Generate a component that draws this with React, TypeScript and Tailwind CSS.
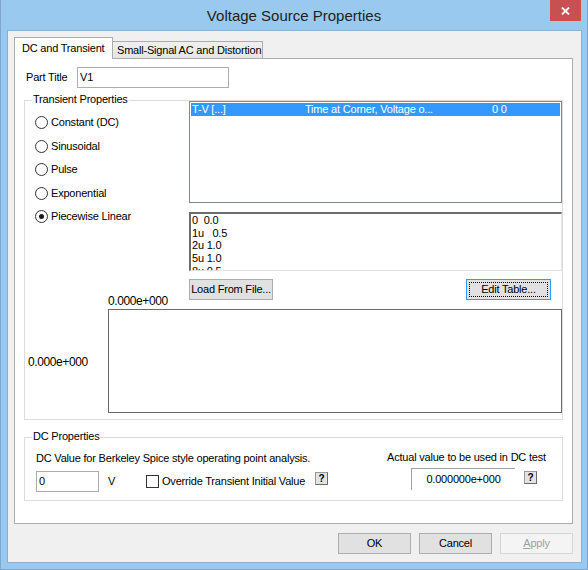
import type { ReactNode } from "react";

// small windows-style push button
const Btn = ({
    w,
    children,
    focus = false,
    disabled = false,
}: {
    w: string;
    children: ReactNode;
    focus?: boolean;
    disabled?: boolean;
}) => {
    return (
        <div
            className={`${w} h-[21px] border ${
                focus ? "border-[#3399ff] p-[2px]" : disabled ? "border-[#d5d5d5]" : "border-[#adadad]"
            } ${disabled ? "bg-[#f4f4f4] text-[#a0a0a0]" : "bg-[#e1e1e1]"} flex items-center justify-center`}
        >
            {focus ? (
                <div className="w-full h-full border border-dotted border-black flex items-center justify-center">
                    {children}
                </div>
            ) : (
                children
            )}
        </div>
    );
};

const Help = ({ className }: { className: string }) => (
    <div
        className={`${className} w-[13px] h-[13px] border border-t-[#9a9a9a] border-l-[#9a9a9a] border-r-[#6a6a6a] border-b-[#6a6a6a] bg-[#e3e3e3] flex items-center justify-center text-[10px] font-bold leading-none tracking-normal`}
    >
        ?
    </div>
);

const Radio = ({ label, checked = false }: { label: string; checked?: boolean }) => (
    <div className="h-[23.5px] flex items-center gap-[3px]">
        <span className="w-[13px] h-[13px] rounded-full border border-[#333333] bg-white flex items-center justify-center">
            {checked && <span className="w-[5px] h-[5px] rounded-full bg-[#1a1a1a]" />}
        </span>
        <span>{label}</span>
    </div>
);

export default function App() {
    const modes = ["Constant (DC)", "Sinusoidal", "Pulse", "Exponential", "Piecewise Linear"];
    const pwl = ["0  0.0", "1u   0.5", "2u 1.0", "5u 1.0", "8u 0.5"];

    return (
        <div className="w-[588px] h-[570px] bg-[#99c9ef] border-x border-b border-[#7ea6ce] font-['Liberation_Sans',Arial,sans-serif] text-[11px] leading-[13px] tracking-[-0.2px] text-black select-none">
            {/* title bar */}
            <div className="h-[30px] grid grid-cols-[1fr_auto_1fr]">
                <div />
                <div className="self-center pt-[2px] text-[15px] leading-[18px] tracking-normal text-[#222222]">
                    Voltage Source Properties
                </div>
                <div className="flex justify-end">
                    <div className="mr-[6px] w-[31px] h-[21px] bg-[#c75050] flex items-center justify-center">
                        <svg width="9" height="8" viewBox="0 0 9 8">
                            <path d="M1 0.5 L8 7.5 M8 0.5 L1 7.5" stroke="white" strokeWidth="1.8" />
                        </svg>
                    </div>
                </div>
            </div>

            {/* client area */}
            <div className="ml-[6px] mr-[5px] h-[533px] border border-[#8bb0d4] bg-[#f0f0f0] flex flex-col">
                <div className="ml-[6px] mt-[6px]">
                    {/* tabs */}
                    <div className="flex items-end h-[21px]">
                        <div className="relative z-10 -mb-px h-[22px] w-[99px] bg-white border border-b-0 border-[#acacac] pl-[7px] flex items-center">
                            DC and Transient
                        </div>
                        <div className="h-[17px] w-[150px] border-t border-r border-[#acacac] bg-linear-to-b from-[#f0f0f0] to-[#e5e5e5] pl-[4px] flex items-center">
                            Small-Signal AC and Distortion
                        </div>
                    </div>

                    {/* tab page */}
                    <div className="w-[559px] h-[466px] border border-[#acacac] bg-white">
                        <div className="flex items-center mt-[8px] ml-[11px]">
                            <span className="w-[51px]">Part Title</span>
                            <div className="w-[152px] h-[21px] border border-[#abadb3] pl-[2px] flex items-center">V1</div>
                        </div>

                        {/* Transient group */}
                        <div className="relative ml-[9px] mt-[12px] w-[539px] h-[320px] border border-[#dcdcdc]">
                            <span className="absolute left-[7px] -top-[8px] bg-white px-[1px]">Transient Properties</span>
                            <div className="flex">
                                <div className="w-[164px] pt-[10px] pl-[10px]">
                                    {modes.map((m) => (
                                        <Radio key={m} label={m} checked={m === "Piecewise Linear"} />
                                    ))}
                                </div>
                                <div className="w-[373px]">
                                    {/* list box */}
                                    <div className="h-[102px] border border-[#828790] bg-white p-[1px]">
                                        <div className="h-[13px] bg-[#3399ff] text-white flex items-center pl-[1px] whitespace-nowrap">
                                            <span className="w-[113px]">T-V [...]</span>
                                            <span className="w-[187px]">Time at Corner, Voltage o...</span>
                                            <span>0 0</span>
                                        </div>
                                    </div>
                                    {/* points */}
                                    <div className="mt-[9px] h-[59px] border-t-2 border-l-2 border-r border-b border-t-[#6d6d6d] border-l-[#6d6d6d] border-r-[#e3e3e3] border-b-[#e3e3e3] bg-white overflow-hidden pl-[1px] leading-[12.7px] whitespace-pre">
                                        {pwl.map((l) => (
                                            <div key={l}>{l}</div>
                                        ))}
                                    </div>
                                    <div className="mt-[8px] flex">
                                        <Btn w="w-[84px]">Load From File...</Btn>
                                        <div className="ml-auto mr-[11px]">
                                            <Btn w="w-[85px]" focus>
                                                Edit Table...
                                            </Btn>
                                        </div>
                                    </div>
                                </div>
                            </div>

                            {/* graph preview */}
                            <div className="flex -mt-[5px] text-[12px] tracking-[-0.4px]">
                                <div className="w-[83px] flex flex-col">
                                    <div className="h-[14px]" />
                                    <div className="h-[104px] flex items-center pt-[2px] pl-[3px]">0.000e+000</div>
                                </div>
                                <div className="w-[454px]">
                                    <div className="h-[13px] mb-[1px]">0.000e+000</div>
                                    <div className="h-[104px] border border-[#6b6b6b] bg-white" />
                                </div>
                            </div>
                        </div>

                        {/* DC group */}
                        <div className="relative ml-[9px] mt-[17px] w-[539px] h-[64px] border border-[#dcdcdc] flex">
                            <span className="absolute left-[7px] -top-[8px] bg-white px-[1px]">DC Properties</span>
                            <div className="w-[362px] pl-[11px]">
                                <div className="mt-[14px]">DC Value for Berkeley Spice style operating point analysis.</div>
                                <div className="mt-[6px] flex items-center">
                                    <div className="w-[63px] h-[21px] border border-[#abadb3] pl-[2px] flex items-center">0</div>
                                    <span className="w-[38px] ml-[9px]">V</span>
                                    <span className="w-[13px] h-[13px] border border-[#333333] bg-white" />
                                    <span className="ml-[3px] w-[153px]">Override Transient Initial Value</span>
                                    <Help className="mb-[6px]" />
                                </div>
                            </div>
                            <div className="pt-[13px]">
                                <div>Actual value to be used in DC test</div>
                                <div className="mt-[4px] flex items-start">
                                    <div className="ml-[24px] w-[104px] h-[22px] border-t border-l border-[#a0a0a0] flex items-center justify-center">
                                        0.000000e+000
                                    </div>
                                    <Help className="ml-[9px] mt-[3px]" />
                                </div>
                            </div>
                        </div>
                    </div>
                </div>

                {/* dialog buttons */}
                <div className="mt-[9px] pr-[8px] flex justify-end gap-[8px]">
                    <Btn w="w-[73px]">OK</Btn>
                    <Btn w="w-[73px]">Cancel</Btn>
                    <Btn w="w-[73px]" disabled>
                        <span>
                            <span className="underline">A</span>pply
                        </span>
                    </Btn>
                </div>
            </div>
        </div>
    );
}
